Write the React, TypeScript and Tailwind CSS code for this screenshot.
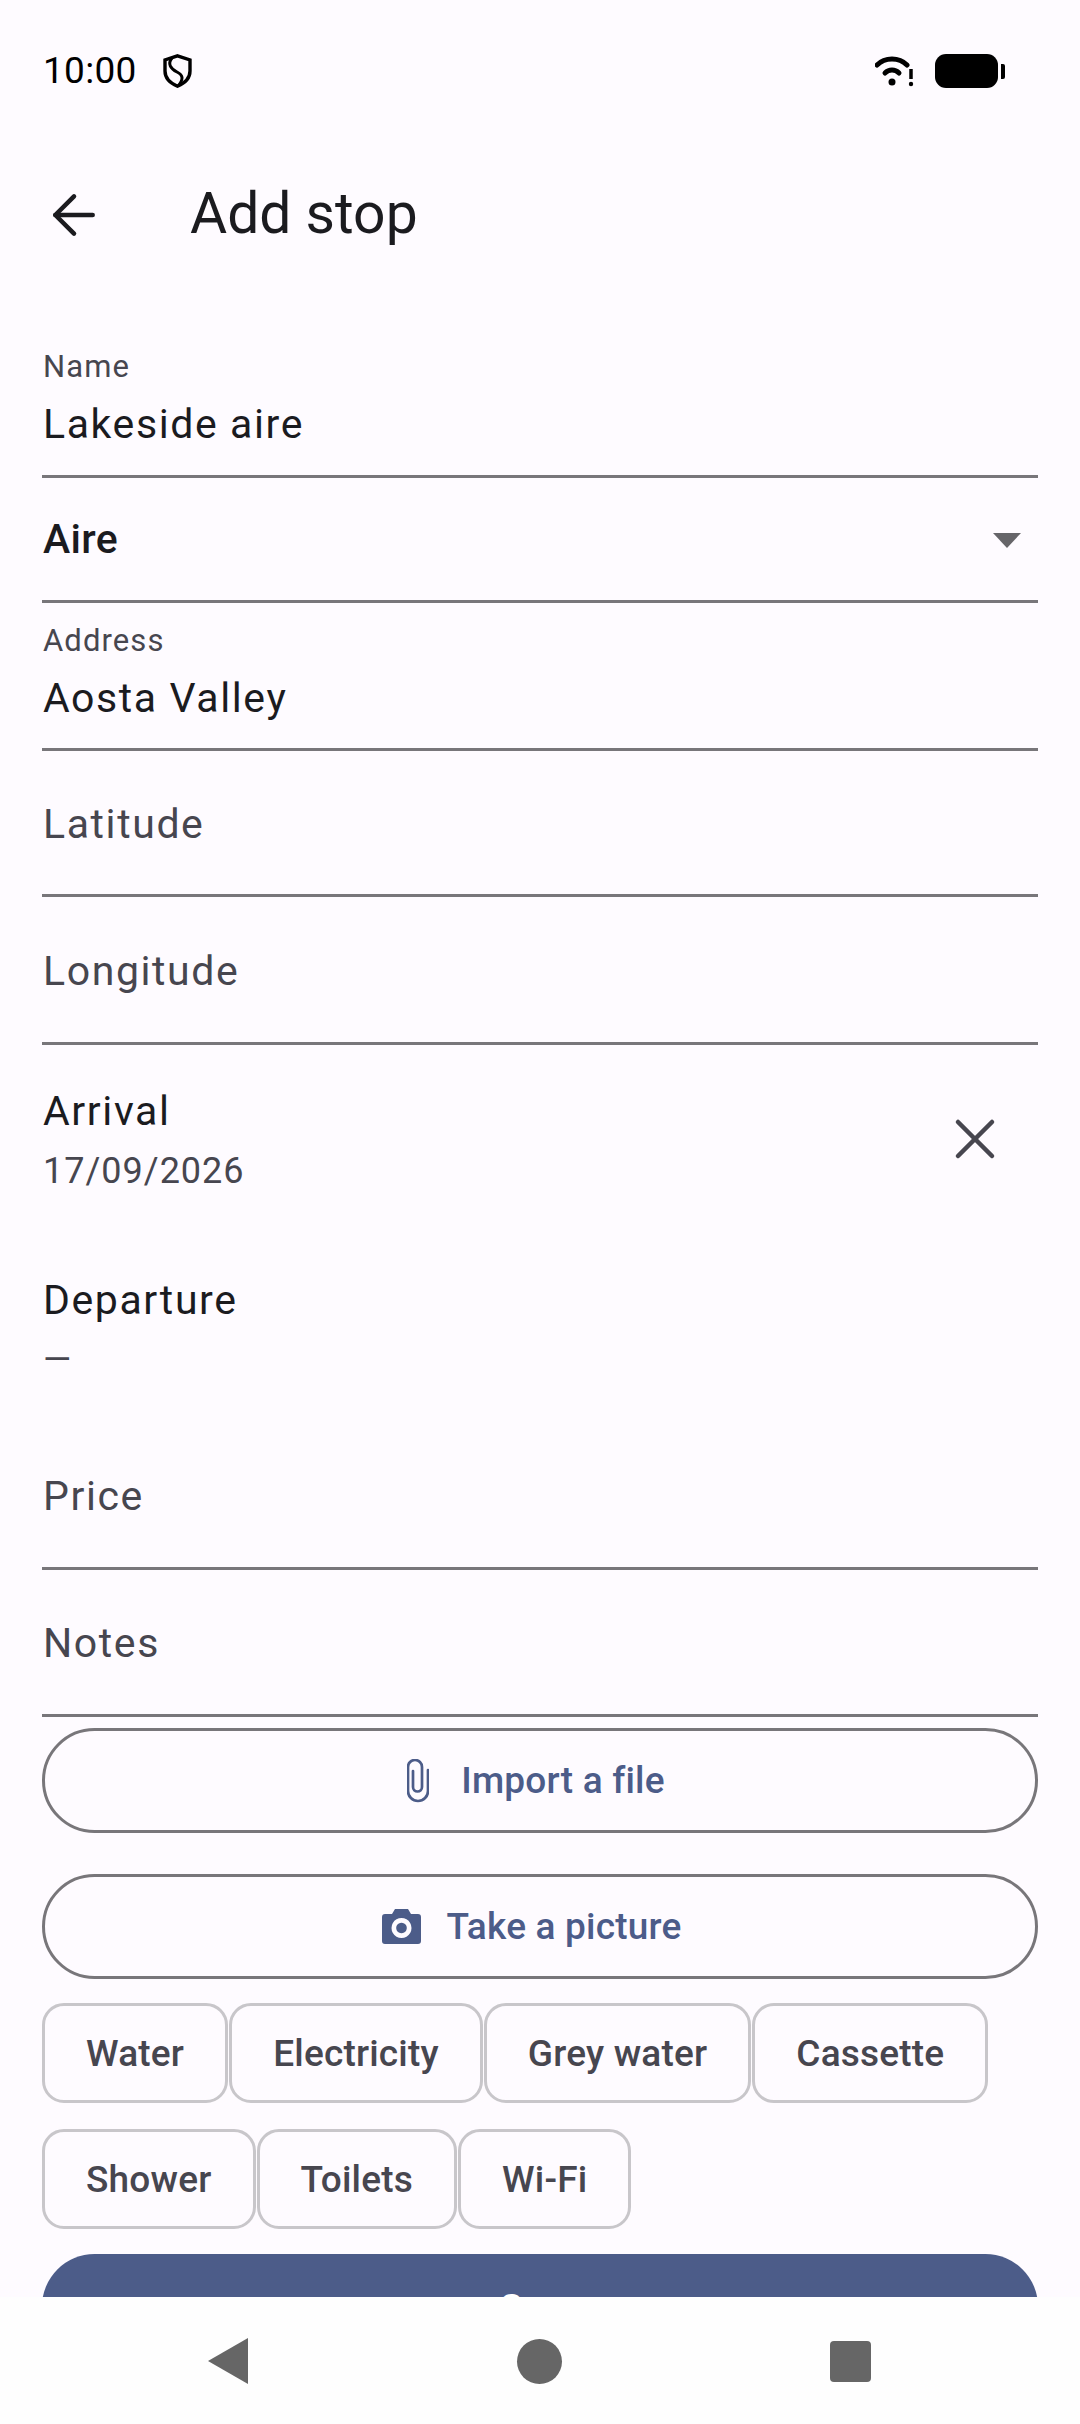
import { ArrowLeft, X } from "lucide-react";

function Field({ label, value, height, top = "pt-[15px]" }: { label: string; value?: string; height: string; top?: string }) {
  return (
    <div className={`border-b-[3px] border-[#78767a] ${height} pl-[1px]`}>
      {value ? (
        <div className={`flex h-full flex-col ${top}`}>
          <span className="text-[31px] leading-[40px] tracking-[1.1px] text-[#47464f]">{label}</span>
          <span className="mt-[9px] text-[41px] leading-[56px] tracking-[1.6px] text-[#1b1b1f]">{value}</span>
        </div>
      ) : (
        <div className="flex h-full items-center pt-[2px]">
          <span className="text-[41px] leading-[56px] tracking-[1.6px] text-[#47464f]">{label}</span>
        </div>
      )}
    </div>
  );
}

function DateRow({ label, value, clear, height }: { label: string; value: string; clear?: boolean; height: string }) {
  return (
    <div className={`flex items-center justify-between pl-[1px] ${height}`}>
      <div className="flex flex-col">
        <span className="text-[41px] leading-[56px] tracking-[1.6px] text-[#1b1b1f]">{label}</span>
        <span className="mt-[7px] text-[36px] leading-[50px] tracking-[1px] text-[#47464f]">{value}</span>
      </div>
      {clear && <X className="mr-[29px] h-[68px] w-[68px] text-[#47464f]" strokeWidth={1.6} />}
    </div>
  );
}

function OutlineButton({ children, inset }: { children: React.ReactNode; inset: string }) {
  return (
    <button className={`flex h-[105px] w-full items-center justify-center rounded-full border-[3px] border-[#78767a] text-[37px] font-medium tracking-[0.2px] text-[#4c5c89] ${inset}`} type="button">
      {children}
    </button>
  );
}

function Chip({ label }: { label: string }) {
  return (
    <div className="flex h-[100px] items-center rounded-[22px] border-[3px] border-[#c8c6ca] px-[41px] pt-[2px] text-[37px] font-medium tracking-[0.2px] text-[#47464f]">
      {label}
    </div>
  );
}

export default function App() {
  return (
    <div className="flex h-[2424px] w-[1080px] flex-col overflow-hidden bg-[#fefbff] font-['Roboto',sans-serif]">
      <div className="flex h-[140px] shrink-0 items-center justify-between pl-[43px] pr-[75px] pt-[2px]">
        <div className="flex items-center gap-[26px]">
          <span className="text-[37px] tracking-[0.3px] text-black">10:00</span>
          <svg className="h-[34px] w-[29px]" viewBox="0 0 29 34" fill="none" stroke="black" strokeWidth="3.4">
            <path d="M14.5 1.8 L27 6 V17 C27 25 21 29.5 14.5 32.2 C8 29.5 2 25 2 17 V6 Z" />
            <path d="M9 4 C4 10 8 15 14 18 C20 21 21 25 15 32" strokeWidth="3" />
          </svg>
        </div>
        <div className="flex items-center gap-[20px]">
          <svg className="h-[36px] w-[40px]" viewBox="0 0 40 36" fill="none" stroke="black" strokeLinecap="round">
            <path d="M2 12 C10 4 24 4 32 12" strokeWidth="5" />
            <path d="M10 20 C14 16 20 16 24 20" strokeWidth="5" />
            <circle cx="17" cy="29" r="3.5" fill="black" stroke="none" />
            <path d="M36 16 V26" strokeWidth="3.5" strokeLinecap="butt" />
            <circle cx="36" cy="31" r="2.2" fill="black" stroke="none" />
          </svg>
          <div className="flex items-center gap-[3px]">
            <div className="h-[34px] w-[63px] rounded-[11px] bg-black" />
            <div className="h-[15px] w-[4px] rounded-r-[2px] bg-black" />
          </div>
        </div>
      </div>

      <div className="flex h-[148px] shrink-0 items-center pl-[42px]">
        <ArrowLeft className="mt-[2px] h-[64px] w-[64px] text-[#1b1b1f]" strokeWidth={1.7} />
        <h1 className="ml-[84px] text-[57px] leading-[70px] text-[#1b1b1f]">Add stop</h1>
      </div>

      <div className="min-h-0 flex-1 overflow-hidden px-[42px] pt-[44px]">
        <Field label="Name" value="Lakeside aire" height="h-[146px]" />
        <div className="flex h-[125px] items-center justify-between border-b-[3px] border-[#78767a] pl-[1px] pr-[17px] pt-[2px]">
          <span className="text-[41px] font-medium tracking-[0.3px] text-[#1b1b1f]">Aire</span>
          <svg className="mt-[2px] h-[16px] w-[28px]" viewBox="0 0 28 16">
            <path d="M0 0 H28 L14 15 Z" fill="#666569" />
          </svg>
        </div>
        <Field label="Address" value="Aosta Valley" height="h-[148px]" top="pt-[18px]" />
        <Field label="Latitude" height="h-[146px]" />
        <Field label="Longitude" height="h-[148px]" />
        <DateRow label="Arrival" value="17/09/2026" clear height="h-[188px]" />
        <DateRow label="Departure" value="—" height="h-[190px]" />
        <Field label="Price" height="h-[147px]" />
        <Field label="Notes" height="h-[147px]" />

        <div className="mt-[11px] flex flex-col gap-[41px]">
          <OutlineButton inset="pr-[8px]">
            <svg className="mr-[32px] h-[44px] w-[22px]" viewBox="0 0 22 44" fill="none" stroke="#4c5c89" strokeWidth="2.7" strokeLinecap="round">
              <path d="M21 11 V32 a10 10 0 0 1 -20 0 V8 a7 7 0 0 1 14 0 V28 a4.5 4.5 0 0 1 -9 0 V12" />
            </svg>
            Import a file
          </OutlineButton>
          <OutlineButton inset="pr-[17px]">
            <svg className="mr-[26px] h-[35px] w-[39px]" viewBox="0 0 39 35" fill="#4c5c89">
              <path fillRule="evenodd" d="M13 0 H26 L29 5 H36 a3 3 0 0 1 3 3 V32 a3 3 0 0 1 -3 3 H3 a3 3 0 0 1 -3 -3 V8 a3 3 0 0 1 3 -3 H10 Z M19.5 9 a10 10 0 1 0 0.01 0 Z M19.5 13.7 a5.3 5.3 0 1 1 -0.01 0 Z" />
            </svg>
            Take a picture
          </OutlineButton>
        </div>

        <div className="mt-[24px] flex flex-wrap gap-x-[1px] gap-y-[26px]">
          {["Water", "Electricity", "Grey water", "Cassette", "Shower", "Toilets", "Wi-Fi"].map((chip) => (
            <Chip key={chip} label={chip} />
          ))}
        </div>

        <button className="mt-[25px] flex h-[105px] w-full items-center justify-center rounded-full bg-[#4c5c89] pt-[2px] text-[37px] font-medium text-white" type="button">
          Save
        </button>
      </div>

      <div className="flex h-[127px] shrink-0 items-center bg-[#fefefe] pt-[1px]">
        <div className="ml-[208px] h-0 w-0 border-y-[23px] border-r-[40px] border-y-transparent border-r-[#666666]" />
        <div className="ml-[269px] h-[45px] w-[45px] rounded-full bg-[#666666]" />
        <div className="ml-[268px] h-[41px] w-[41px] rounded-[4px] bg-[#666666]" />
      </div>
    </div>
  );
}
